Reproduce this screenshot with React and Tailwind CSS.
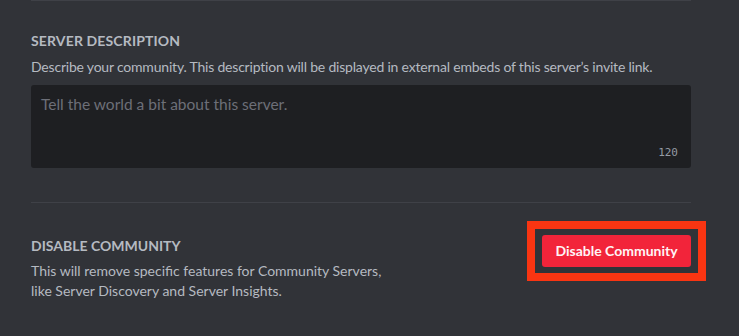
export default function App() {
  return (
    <div className="w-[739px] h-[336px] bg-[#313338] overflow-hidden" style={{ fontFamily: 'Lato, "Noto Sans", sans-serif' }}>
      <div className="ml-[31px] w-[660px]">
        <div className="h-px bg-[#3f4147]" />
        <div className="mt-[31px] text-[14px] leading-[18px] font-bold uppercase text-[#b5bac1] tracking-[0.01em]">Server Description</div>
        <div className="mt-[7px] text-[14px] leading-[20px] text-[#b5bac1] tracking-[-0.2px]">
          Describe your community. This description will be displayed in external embeds of this server’s invite link.
        </div>
        <div className="mt-[8px] h-[83px] rounded-[3px] bg-[#1e1f22] relative px-[10px] pt-[8px]">
          <div className="text-[15.5px] leading-[22px] text-[#6d6f78]">Tell the world a bit about this server.</div>
          <div className="absolute right-[13px] bottom-[8px] text-[11px] leading-[14px] text-[#949ba4]" style={{ fontFamily: '"DejaVu Sans Mono", monospace' }}>120</div>
        </div>
        <div className="mt-[34px] h-px bg-[#3f4147]" />
        <div className="mt-[34px] flex items-start justify-between">
          <div>
            <div className="text-[14px] leading-[18px] font-bold uppercase text-[#b5bac1]">Disable Community</div>
            <div className="mt-[6px] text-[14px] leading-[20px] text-[#b5bac1]">
              This will remove specific features for Community Servers,
              <br />
              like Server Discovery and Server Insights.
            </div>
          </div>
          <div className="-mt-[16px] -mr-[15px] border-[8px] border-[#f93512] px-[7px] py-[6px]">
            <button className="h-[32px] w-[149px] rounded-[3px] bg-[#f2243a] text-[#fff4f6] text-[14px] font-bold leading-[16px]">Disable Community</button>
          </div>
        </div>
      </div>
    </div>
  );
}
